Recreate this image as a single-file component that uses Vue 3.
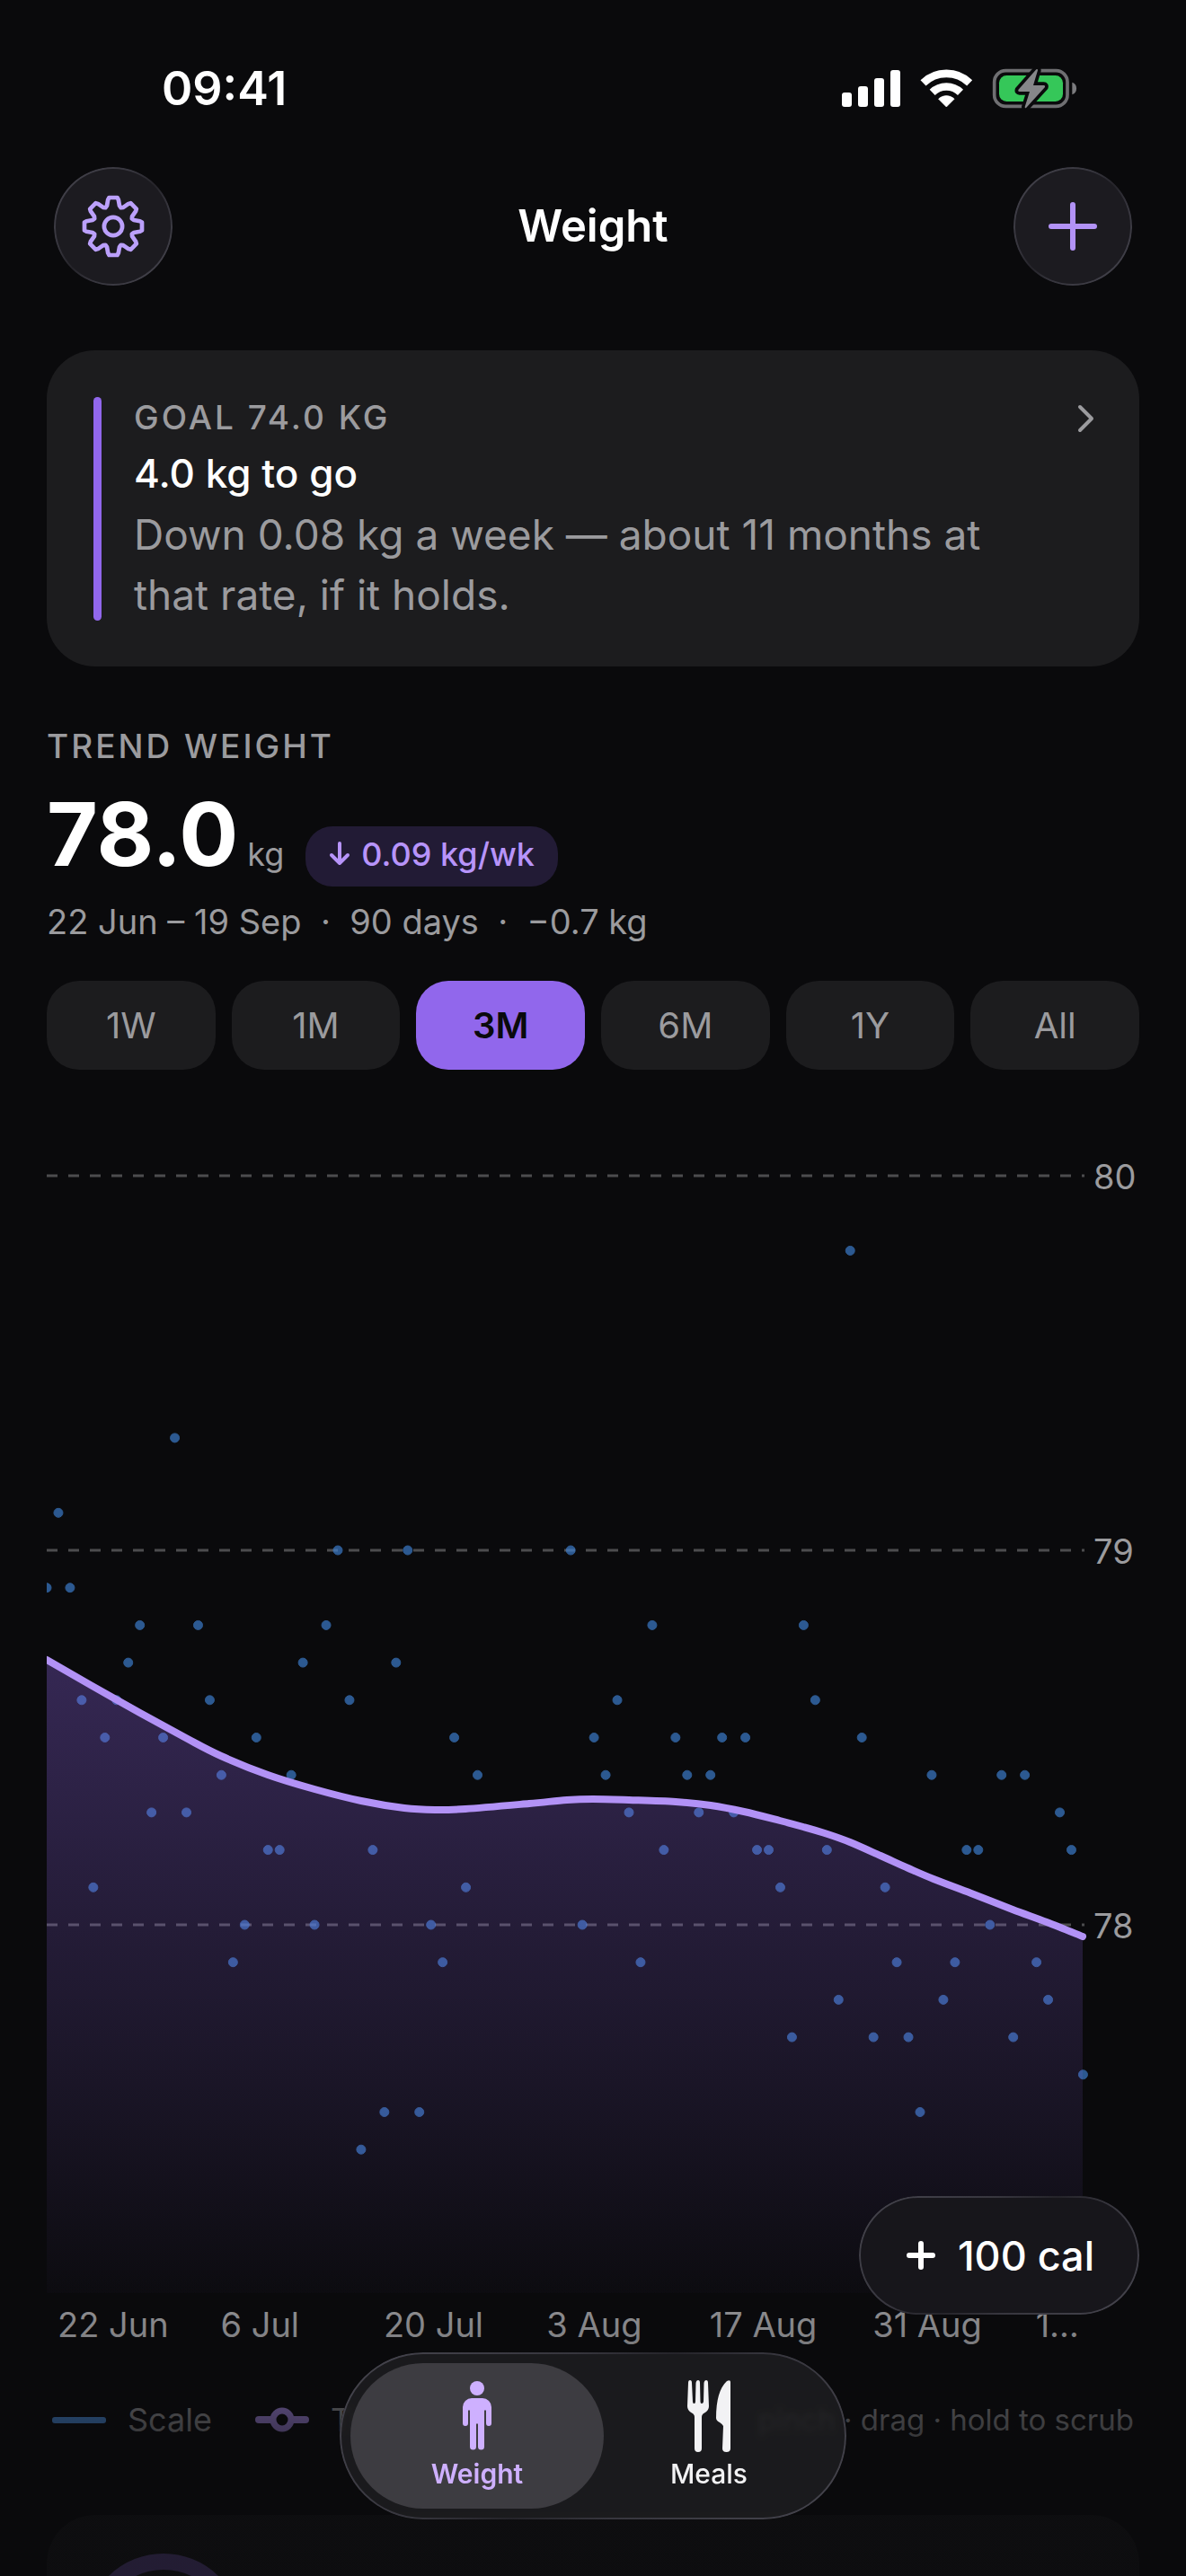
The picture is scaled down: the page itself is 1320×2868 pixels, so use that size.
<script setup>
import { ref } from 'vue'

const ranges = ['1W', '1M', '3M', '6M', '1Y', 'All']
const selectedRange = ref('3M')

// Scale readings keyed by day index, in kilograms. Days 38–44 were not logged.
const readings = [
  78.9, 79.1, 78.9, 78.6, 78.1, 78.5, 78.6, 78.7, 78.8, 78.3,
  78.5, 79.3, 78.3, 78.8, 78.6, 78.4, 77.9, 78.0, 78.5, 78.2,
  78.2, 78.4, 78.7, 78.0, 78.8, 79.0, 78.6, 77.4, 78.2, 77.5,
  78.7, 79.0, 77.5, 78.0, 77.9, 78.5, 78.1, 78.4, null, null,
  null, null, null, null, null, 79.0, 78.0, 78.5, 78.4, 78.6,
  78.3, 77.9, 78.8, 78.2, 78.5, 78.4, 78.3, 78.4, 78.5, 78.3,
  78.5, 78.2, 78.2, 78.1, 77.7, 78.8, 78.6, 78.2, 77.8, 79.8,
  78.5, 77.7, 78.1, 77.9, 77.7, 77.5, 78.4, 77.8, 77.9, 78.2,
  78.2, 78.0, 78.4, 77.7, 78.4, 77.9, 77.8, 78.3, 78.2, 77.6,
]

const DAY = 12.96
const KG = 417
const BASE = 1294
const xOf = (day) => day * DAY
const yOf = (kg) => 50 + (80 - kg) * KG

const dots = readings
  .map((kg, day) => ({ kg, day }))
  .filter((d) => d.kg !== null)
  .map((d) => ({ day: d.day, x: xOf(d.day), y: yOf(d.kg) }))

const gridlines = [80, 79, 78].map((kg) => ({ kg, y: yOf(kg) }))

const dates = ['22 Jun', '6 Jul', '20 Jul', '3 Aug', '17 Aug', '31 Aug', '1…'].map(
  (label, i) => ({ label, x: xOf(i * 14) + 12 }),
)

// Smoothed trend in chart units.
const trend = [
  [0, 589], [77, 633], [155, 676], [194, 696], [246, 717], [298, 733], [350, 746],
  [398, 754], [432, 756], [466, 755], [537, 749], [579, 745], [608, 744], [648, 745],
  [700, 747], [739, 751], [776, 758], [816, 768], [842, 775], [869, 783], [894, 792],
  [928, 807], [959, 821], [987, 833], [1029, 849], [1075, 867], [1113, 881], [1153, 897],
]

function smooth(points) {
  let d = `M${points[0][0]} ${points[0][1]}`
  for (let i = 0; i < points.length - 1; i++) {
    const p0 = points[i - 1] || points[i]
    const p1 = points[i]
    const p2 = points[i + 1]
    const p3 = points[i + 2] || p2
    d += `C${p1[0] + (p2[0] - p0[0]) / 6} ${p1[1] + (p2[1] - p0[1]) / 6} `
    d += `${p2[0] - (p3[0] - p1[0]) / 6} ${p2[1] - (p3[1] - p1[1]) / 6} ${p2[0]} ${p2[1]}`
  }
  return d
}

const trendLine = smooth(trend)
const trendArea = `${trendLine}V${BASE}H0Z`

// Eight-toothed cog outline around the origin.
function cog() {
  const at = (r, deg) => {
    const a = (deg * Math.PI) / 180
    return `${(r * Math.sin(a)).toFixed(1)} ${(-r * Math.cos(a)).toFixed(1)}`
  }
  const pts = []
  for (let k = 0; k < 8; k++) {
    const a = k * 45
    pts.push(at(90, a - 11), at(96, a - 8), at(96, a + 8), at(90, a + 11), at(71, a + 17), at(67, a + 22.5), at(71, a + 28))
  }
  return `M${pts.join('L')}Z`
}
const cogPath = cog()
</script>

<template>
  <div class="screen">
    <div class="status">
      <span class="clock">09:41</span>
      <svg class="status-icons" viewBox="108 69 789 141" aria-hidden="true">
        <g fill="#fff">
          <rect x="111" y="153" width="33" height="48" rx="9" />
          <rect x="165" y="132" width="33" height="69" rx="9" />
          <rect x="219" y="105" width="33" height="96" rx="9" />
          <rect x="273" y="78" width="33" height="123" rx="9" />
          <path d="M460 201L433.600 174.500A38 38 0 0 1 486.400 174.500Z" stroke="#fff" stroke-width="2" stroke-linejoin="round" />
        </g>
        <g fill="none" stroke="#fff" stroke-width="26">
          <path d="M382.500 120.800A111.500 111.500 0 0 1 537.500 120.800" />
          <path d="M413 152.500A67.500 67.500 0 0 1 507 152.500" />
        </g>
        <rect x="620" y="80" width="244" height="119" rx="38" fill="none" stroke="#6f6f72" stroke-width="11" />
        <rect x="636" y="96" width="213" height="87" rx="25" fill="#35c759" />
        <path d="M880 119C899 124 899 155 880 160Z" fill="#7c7c7f" />
        <path d="M760 76L700 144Q698 150 704 150H738L722 201Q722 207 727 203L789 135Q791 129 785 129H750L765 79Q765 73 760 76Z" fill="#868689" stroke="#0a0a0c" stroke-width="22" stroke-linejoin="round" paint-order="stroke" />
      </svg>
    </div>

    <header class="header">
      <button class="round glass" type="button" aria-label="Settings">
        <svg class="round-icon" viewBox="-104 -104 208 208" fill="none" stroke="#bba0fb" stroke-width="14" stroke-linejoin="round">
          <path :d="cogPath" />
          <circle r="30" />
        </svg>
      </button>
      <h1 class="title">Weight</h1>
      <button class="round glass" type="button" aria-label="Add weight">
        <svg class="round-icon" viewBox="0 0 70 70" fill="none" stroke="#b292f6" stroke-width="6" stroke-linecap="round">
          <path d="M35 11V59M11 35H59" />
        </svg>
      </button>
    </header>

    <main class="content">
      <a class="goal" href="#goal">
        <span class="goal-bar"></span>
        <span class="goal-text">
          <span class="caps">GOAL 74.0 KG</span>
          <strong class="goal-left">4.0 kg to go</strong>
          <span class="goal-note">Down 0.08 kg a week — about 11 months at that rate, if it holds.</span>
        </span>
        <svg class="chevron" viewBox="0 0 20 32" fill="none" stroke="#9b9b9e" stroke-width="4" stroke-linecap="round" stroke-linejoin="round">
          <path d="M4 3L17 16L4 29" />
        </svg>
      </a>

      <section class="trend">
        <h2 class="caps">TREND WEIGHT</h2>
        <div class="figure">
          <span class="value">78.0</span>
          <span class="unit">kg</span>
          <span class="rate">
            <svg class="arrow" viewBox="0 0 24 28" fill="none" stroke="#b794fa" stroke-width="4" stroke-linecap="round" stroke-linejoin="round">
              <path d="M12 3V25M3 16L12 25L21 16" />
            </svg>
            0.09 kg/wk
          </span>
        </div>
        <p class="period">22 Jun – 19 Sep&nbsp; ·&nbsp; 90 days&nbsp; ·&nbsp; −0.7 kg</p>
      </section>

      <div class="ranges" role="group" aria-label="Range">
        <button
          v-for="r in ranges"
          :key="r"
          type="button"
          class="range"
          :class="{ on: r === selectedRange }"
          :aria-pressed="r === selectedRange"
          @click="selectedRange = r"
        >{{ r }}</button>
      </div>

      <svg class="chart" viewBox="0 0 1216 1360" role="img" aria-label="Weight trend over 90 days">
        <defs>
          <linearGradient id="fill" gradientUnits="userSpaceOnUse" x1="0" y1="589" x2="0" y2="1294">
            <stop offset="0" stop-color="#9167ec" stop-opacity="0.32" />
            <stop offset="1" stop-color="#9167ec" stop-opacity="0.02" />
          </linearGradient>
          <clipPath id="plot"><rect x="0" y="0" width="1166" height="1300" /></clipPath>
        </defs>
        <g stroke="#4c4c4e" stroke-width="3" stroke-dasharray="12 12">
          <line v-for="g in gridlines" :key="g.kg" x1="0" x2="1155" :y1="g.y" :y2="g.y" />
        </g>
        <g clip-path="url(#plot)">
          <g fill="#3f83d6" stroke="#3f83d6" stroke-width="1" opacity="0.66">
            <circle v-for="d in dots" :key="d.day" :cx="d.x" :cy="d.y" r="5" />
          </g>
          <path :d="trendArea" fill="url(#fill)" />
          <path :d="trendLine" fill="none" stroke="#b292f6" stroke-width="8" stroke-linecap="round" />
        </g>
        <g class="axis">
          <text v-for="g in gridlines" :key="g.kg" x="1165" :y="g.y + 15">{{ g.kg }}</text>
          <text v-for="d in dates" :key="d.label" :x="d.x" y="1343">{{ d.label }}</text>
        </g>
      </svg>

      <div class="legend">
        <span class="key">
          <svg class="swatch" viewBox="0 0 60 28"><rect y="11" width="60" height="7" rx="3" fill="#4f99f0" /></svg>
          Scale
        </span>
        <span class="key">
          <svg class="swatch" viewBox="0 0 60 28">
            <rect y="10" width="60" height="8" rx="4" fill="#b292f6" />
            <circle cx="30" cy="14" r="10" fill="#0a0a0c" stroke="#b292f6" stroke-width="7" />
          </svg>
          Trend
        </span>
        <span class="hint">pinch · drag · hold to scrub</span>
      </div>

      <section class="next-card">
        <svg class="ring" viewBox="0 0 174 174" fill="none" stroke="#8767d0" stroke-width="18"><circle cx="87" cy="87" r="78" /></svg>
      </section>
    </main>

    <div class="fade"></div>

    <button class="quick glass" type="button">
      <svg class="quick-icon" viewBox="0 0 34 34" fill="none" stroke="#fff" stroke-width="6" stroke-linecap="round"><path d="M17 4V30M4 17H30" /></svg>
      100 cal
    </button>

    <nav class="tabs glass">
      <a class="tab on" href="#weight" aria-current="page">
        <svg class="tab-icon" viewBox="-24 0 80 82" fill="currentColor">
          <circle cx="16" cy="9" r="8" />
          <path d="M10 20H22A10 10 0 0 1 32 30V48A3 3 0 0 1 26 48V33.500H24V74A3.500 3.500 0 0 1 17 74V48.500H15V74A3.500 3.500 0 0 1 8 74V33.500H6V48A3 3 0 0 1 0 48V30A10 10 0 0 1 10 20Z" />
        </svg>
        Weight
      </a>
      <a class="tab" href="#meals">
        <svg class="tab-icon" viewBox="-16 0 80 82" fill="currentColor">
          <path d="M1 3Q1 0 3 0T5 3L6 24Q6 26 7.500 26T9 24L9.500 3Q10 0 12 0T14 3L14.500 24Q14.500 26 16 26T18 24L18.500 3Q19 0 21 0T23 3L24 29Q24 34 19 36.500Q16 38 16 41V76Q16 80 12 80T8 76L8 41Q8 38 5 36.500Q0 34 0 29Z" />
          <path d="M48 2V76Q48 80 43.500 80T39 76L40 51Q39 49 36 47Q32 45 32 42Q32 12 44 1Q48 -1 48 2Z" />
        </svg>
        Meals
      </a>
    </nav>
  </div>
</template>

<style>
body {
  margin: 0;
  background: #0a0a0c;
}
</style>

<style scoped>
.screen {
  position: relative;
  height: 100vh;
  overflow: hidden;
  background: #0a0a0c;
  color: #fff;
  font-family: Inter, "Liberation Sans", sans-serif;
  font-size: 36px;
}
button {
  font-family: inherit;
  border: 0;
  margin: 0;
  padding: 0;
  cursor: pointer;
}
a {
  color: inherit;
  text-decoration: none;
}
svg {
  display: block;
  flex: none;
}
h1, h2, p {
  margin: 0;
}
.status {
  display: flex;
  align-items: center;
  justify-content: space-between;
  height: 64px;
  padding: 66px 121px 0 180px;
}
.clock {
  font-size: 52px;
  font-weight: 600;
}
.status-icons {
  width: 263px;
  height: 47px;
}
.header {
  display: flex;
  align-items: center;
  justify-content: space-between;
  padding: 56px 60px 0;
}
.title {
  font-size: 49px;
  font-weight: 600;
  line-height: 60px;
}
.glass {
  position: relative;
  background: #1c1b20;
}
.glass::before {
  content: "";
  position: absolute;
  inset: 0;
  border-radius: inherit;
  padding: 2px;
  background: linear-gradient(135deg, #46454e, #37363e 35%, #25242a 50%, #37363e 65%, #46454e);
  -webkit-mask: linear-gradient(#000 0 0) content-box exclude, linear-gradient(#000 0 0);
  mask: linear-gradient(#000 0 0) content-box exclude, linear-gradient(#000 0 0);
  pointer-events: none;
}
.round {
  display: grid;
  place-items: center;
  width: 132px;
  height: 132px;
  border-radius: 66px;
}
.round-icon {
  width: 70px;
  height: 70px;
}
.content {
  padding: 72px 52px 0;
}
.caps {
  font-size: 37px;
  font-weight: 500;
  line-height: 46px;
  letter-spacing: 3px;
  color: #9b9b9e;
}
.goal {
  display: flex;
  padding: 52px 50px 46px 52px;
  border-radius: 54px;
  background: #1c1c1e;
}
.goal-bar {
  flex: none;
  width: 9px;
  margin-bottom: 5px;
  border-radius: 5px;
  background: #9167ec;
}
.goal-text {
  display: flex;
  flex: 1;
  flex-direction: column;
  padding: 0 64px 0 36px;
}
.goal-left {
  margin-top: 4px;
  font-size: 44px;
  font-weight: 500;
  line-height: 70px;
}
.goal-note {
  font-size: 46px;
  line-height: 67px;
  color: #9b9b9e;
}
.chevron {
  width: 20px;
  height: 32px;
  margin-top: 8px;
}
.trend {
  margin-top: 66px;
}
.figure {
  display: flex;
  align-items: baseline;
  margin-top: 20px;
}
.value {
  font-size: 98px;
  font-weight: 700;
  line-height: 110px;
}
.unit {
  margin-left: 10px;
  font-size: 36px;
  color: #9b9b9e;
}
.rate {
  display: flex;
  align-items: baseline;
  gap: 12px;
  margin-left: 24px;
  padding: 10px 26px 14px;
  border-radius: 30px;
  background: #221b35;
  color: #b794fa;
  font-size: 36px;
  font-weight: 500;
  line-height: 43px;
}
.arrow {
  width: 24px;
  height: 28px;
}
.period {
  margin-top: 15px;
  font-size: 38px;
  line-height: 48px;
  color: #9b9b9e;
}
.ranges {
  display: grid;
  grid-template-columns: repeat(6, 1fr);
  gap: 18px;
  margin-top: 42px;
}
.range {
  height: 99px;
  border-radius: 36px;
  background: #1c1c1e;
  color: #9b9b9e;
  font-size: 40px;
}
.range.on {
  background: #9167ec;
  color: #0a0a0c;
  font-weight: 600;
}
.chart {
  width: 100%;
  height: auto;
  margin-top: 68px;
}
.axis {
  fill: #9b9b9e;
  font-size: 38px;
}
.legend {
  display: flex;
  gap: 48px;
  margin-top: 52px;
  padding: 0 6px;
  font-size: 36px;
  line-height: 46px;
  color: #9b9b9e;
}
.key {
  display: flex;
  align-items: center;
  gap: 24px;
}
.swatch {
  width: 60px;
  height: 28px;
}
.hint {
  margin-left: auto;
  font-size: 33px;
}
.next-card {
  margin-top: 83px;
  padding: 43px;
  border-radius: 54px;
  background: #1c1c1e;
}
.ring {
  width: 174px;
  height: 174px;
}
.fade {
  position: absolute;
  right: 0;
  bottom: 0;
  left: 0;
  height: 348px;
  background: linear-gradient(rgba(10, 10, 12, 0), rgba(10, 10, 12, 0.16) 22%, rgba(10, 10, 12, 0.54) 43%, rgba(10, 10, 12, 0.68) 54%, rgba(10, 10, 12, 0.8) 78%);
  pointer-events: none;
}
.quick {
  position: absolute;
  right: 52px;
  bottom: 291px;
  display: flex;
  align-items: center;
  gap: 24px;
  height: 132px;
  padding: 0 50px 0 52px;
  border-radius: 66px;
  background: #17161b;
  color: #fff;
  font-size: 45px;
  font-weight: 500;
}
.quick-icon {
  width: 34px;
  height: 34px;
}
.tabs {
  position: absolute;
  bottom: 63px;
  left: 50%;
  display: flex;
  padding: 12px;
  border-radius: 93px;
  background: rgba(31, 31, 33, 0.82);
  backdrop-filter: blur(3px);
  transform: translateX(-50%);
}
.tab {
  display: flex;
  flex-direction: column;
  align-items: center;
  gap: 3px;
  width: 282px;
  height: 143px;
  padding-top: 19px;
  border-radius: 81px;
  color: #f2f2f4;
  font-size: 30px;
  font-weight: 500;
  line-height: 38px;
}
.tab + .tab {
  margin-left: -24px;
}
.tab.on {
  background: rgba(64, 63, 68, 0.92);
  color: #ceb0ff;
  font-weight: 600;
}
.tab-icon {
  width: 80px;
  height: 82px;
}
</style>
